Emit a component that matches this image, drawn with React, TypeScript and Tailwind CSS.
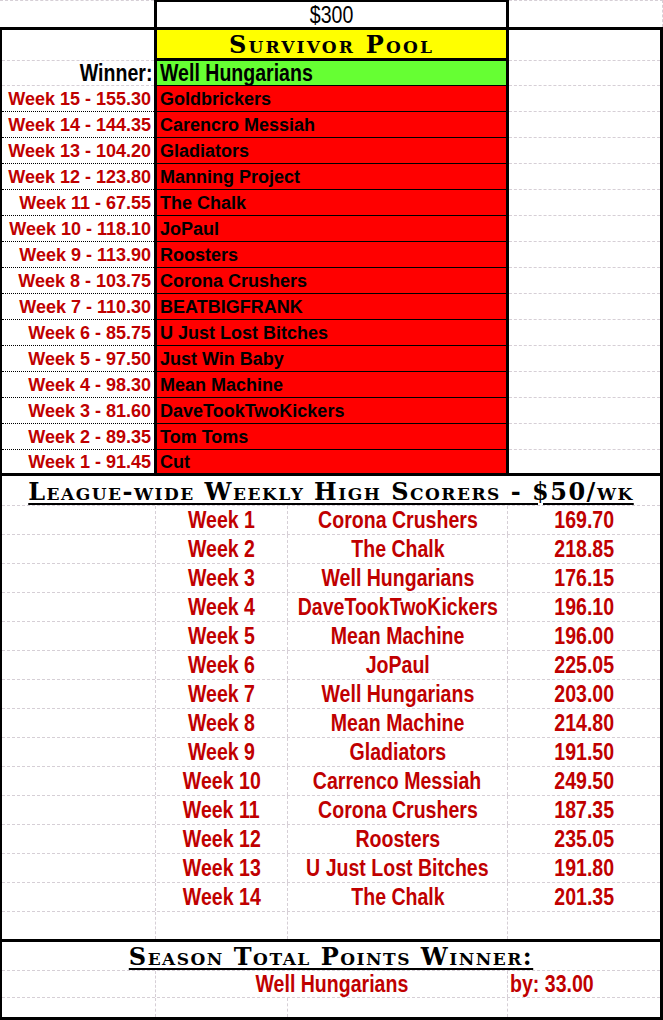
const survivors: [string, string][] = [
  ["Week 15 - 155.30", "Goldbrickers"],
  ["Week 14 - 144.35", "Carencro Messiah"],
  ["Week 13 - 104.20", "Gladiators"],
  ["Week 12 - 123.80", "Manning Project"],
  ["Week 11 - 67.55", "The Chalk"],
  ["Week 10 - 118.10", "JoPaul"],
  ["Week 9 - 113.90", "Roosters"],
  ["Week 8 - 103.75", "Corona Crushers"],
  ["Week 7 - 110.30", "BEATBIGFRANK"],
  ["Week 6 - 85.75", "U Just Lost Bitches"],
  ["Week 5 - 97.50", "Just Win Baby"],
  ["Week 4 - 98.30", "Mean Machine"],
  ["Week 3 - 81.60", "DaveTookTwoKickers"],
  ["Week 2 - 89.35", "Tom Toms"],
  ["Week 1 - 91.45", "Cut"],
]

const highScorers: [string, string, string][] = [
  ["Week 1", "Corona Crushers", "169.70"],
  ["Week 2", "The Chalk", "218.85"],
  ["Week 3", "Well Hungarians", "176.15"],
  ["Week 4", "DaveTookTwoKickers", "196.10"],
  ["Week 5", "Mean Machine", "196.00"],
  ["Week 6", "JoPaul", "225.05"],
  ["Week 7", "Well Hungarians", "203.00"],
  ["Week 8", "Mean Machine", "214.80"],
  ["Week 9", "Gladiators", "191.50"],
  ["Week 10", "Carrenco Messiah", "249.50"],
  ["Week 11", "Corona Crushers", "187.35"],
  ["Week 12", "Roosters", "235.05"],
  ["Week 13", "U Just Lost Bitches", "191.80"],
  ["Week 14", "The Chalk", "201.35"],
]

// arial narrow look-alike: liberation sans squeezed sideways
const Narrow = ({ children, origin = "origin-center" }: { children: React.ReactNode; origin?: string }) => (
  <span className={`inline-block whitespace-nowrap scale-x-[0.85] ${origin}`}>{children}</span>
)

const App = () => {
  return (
    <div className="w-[663px] h-[1020px] bg-white font-['Liberation_Sans',Arial,sans-serif] text-black">
      {/* top row with prize */}
      <div className="flex h-[27px]">
        <div className="w-[154px] border-t border-dashed border-[#d6cfd6]"></div>
        <div className="w-[355px] border-x-[3px] border-t-2 border-black flex items-center justify-center pt-[2px] text-[23px] leading-none">
          <Narrow>$300</Narrow>
        </div>
        <div className="flex-1 border-t border-r border-dashed border-[#d6cfd6]"></div>
      </div>

      <div className="border-l-2 border-r-[3px] border-y-[3px] border-black h-[993px] flex flex-col">
        {/* survivor pool */}
        <div className="flex h-[31px]">
          <div className="w-[152px] border-b border-dashed border-[#d6cfd6]"></div>
          <div className="w-[355px] border-x-[3px] border-b-[3px] border-black bg-[#ffff00] flex items-center justify-center pt-[2px] text-[24px] font-bold font-['DejaVu_Serif',serif] [font-variant:small-caps] tracking-[2.2px]">
            Survivor Pool
          </div>
          <div className="flex-1 border-b border-dashed border-[#d6cfd6]"></div>
        </div>
        <div className="flex h-[25px]">
          <div className="w-[152px] border-b border-dashed border-[#d6cfd6] flex items-center justify-end pr-[2px] text-[23px] leading-none font-bold">
            <Narrow origin="origin-right">Winner:</Narrow>
          </div>
          <div className="w-[355px] border-x-[3px] border-b border-black bg-[#66ff33] flex items-center pl-[3px] text-[23px] leading-none font-bold">
            <Narrow origin="origin-left">Well Hungarians</Narrow>
          </div>
          <div className="flex-1 border-b border-dashed border-[#d6cfd6]"></div>
        </div>
        {survivors.map(([week, team], i) => {
          const last = i === survivors.length - 1
          return (
            <div key={week} className={last ? "flex h-[23px]" : "flex h-[26px]"}>
              <div className={last ? "w-[152px] flex items-center justify-end pr-[3px] pt-[1px] text-[18px] font-bold text-[#c00000]" : "w-[152px] border-b border-dotted border-black flex items-center justify-end pr-[3px] pt-[1px] text-[18px] font-bold text-[#c00000]"}>
                {week}
              </div>
              <div className={last ? "w-[355px] border-x-[3px] border-black bg-[#ff0000] flex items-center pl-[3px] pt-[1px] text-[18px] font-bold" : "w-[355px] border-x-[3px] border-b border-black bg-[#ff0000] flex items-center pl-[3px] pt-[1px] text-[18px] font-bold"}>
                {team}
              </div>
              <div className={last ? "flex-1" : "flex-1 border-b border-dashed border-[#d6cfd6]"}></div>
            </div>
          )
        })}

        {/* weekly high scorers */}
        <div className="border-t-[3px] border-black">
          <div className="h-[30px] border-b border-dashed border-[#d6cfd6] flex items-center justify-center pt-[2px]">
            <span className="text-[24px] leading-none font-bold font-['DejaVu_Serif',serif] [font-variant:small-caps] tracking-[1.5px] underline decoration-2 underline-offset-[3px]">
              League-wide Weekly High Scorers - $50/wk
            </span>
          </div>
          {highScorers.map(([week, team, pts]) => (
            <div key={week} className="flex h-[29px] border-b border-dashed border-[#d6cfd6] text-[23px] leading-none font-bold text-[#c00000]">
              <div className="w-[154px] border-r border-dashed border-[#d6cfd6]"></div>
              <div className="w-[132px] border-r border-dashed border-[#d6cfd6] flex items-center justify-center"><Narrow>{week}</Narrow></div>
              <div className="w-[220px] border-r border-dashed border-[#d6cfd6] flex items-center justify-center"><Narrow>{team}</Narrow></div>
              <div className="flex-1 flex items-center justify-center"><Narrow>{pts}</Narrow></div>
            </div>
          ))}
          <div className="flex h-[27px]">
            <div className="w-[154px] border-r border-dashed border-[#d6cfd6]"></div>
            <div className="w-[132px] border-r border-dashed border-[#d6cfd6]"></div>
            <div className="w-[220px] border-r border-dashed border-[#d6cfd6]"></div>
            <div className="flex-1"></div>
          </div>
        </div>

        {/* season total */}
        <div className="border-t-[3px] border-black flex-1 flex flex-col">
          <div className="h-[29px] border-b border-dashed border-[#d6cfd6] flex items-center justify-center pt-[2px]">
            <span className="text-[24px] leading-none font-bold font-['DejaVu_Serif',serif] [font-variant:small-caps] tracking-[1.5px] underline decoration-2 underline-offset-[3px]">
              Season Total Points Winner:
            </span>
          </div>
          <div className="flex h-[27px] border-b border-dashed border-[#d6cfd6] text-[23px] leading-none font-bold text-[#c00000]">
            <div className="w-[154px] border-r border-dashed border-[#d6cfd6]"></div>
            <div className="w-[352px] border-r border-dashed border-[#d6cfd6] flex items-center justify-center"><Narrow>Well Hungarians</Narrow></div>
            <div className="flex-1 flex items-center pl-[2px]"><Narrow origin="origin-left">by: 33.00</Narrow></div>
          </div>
          <div className="flex flex-1">
            <div className="w-[154px] border-r border-dashed border-[#d6cfd6]"></div>
            <div className="w-[132px] border-r border-dashed border-[#d6cfd6]"></div>
            <div className="w-[220px] border-r border-dashed border-[#d6cfd6]"></div>
            <div className="flex-1"></div>
          </div>
        </div>
      </div>
    </div>
  )
}

export default App
